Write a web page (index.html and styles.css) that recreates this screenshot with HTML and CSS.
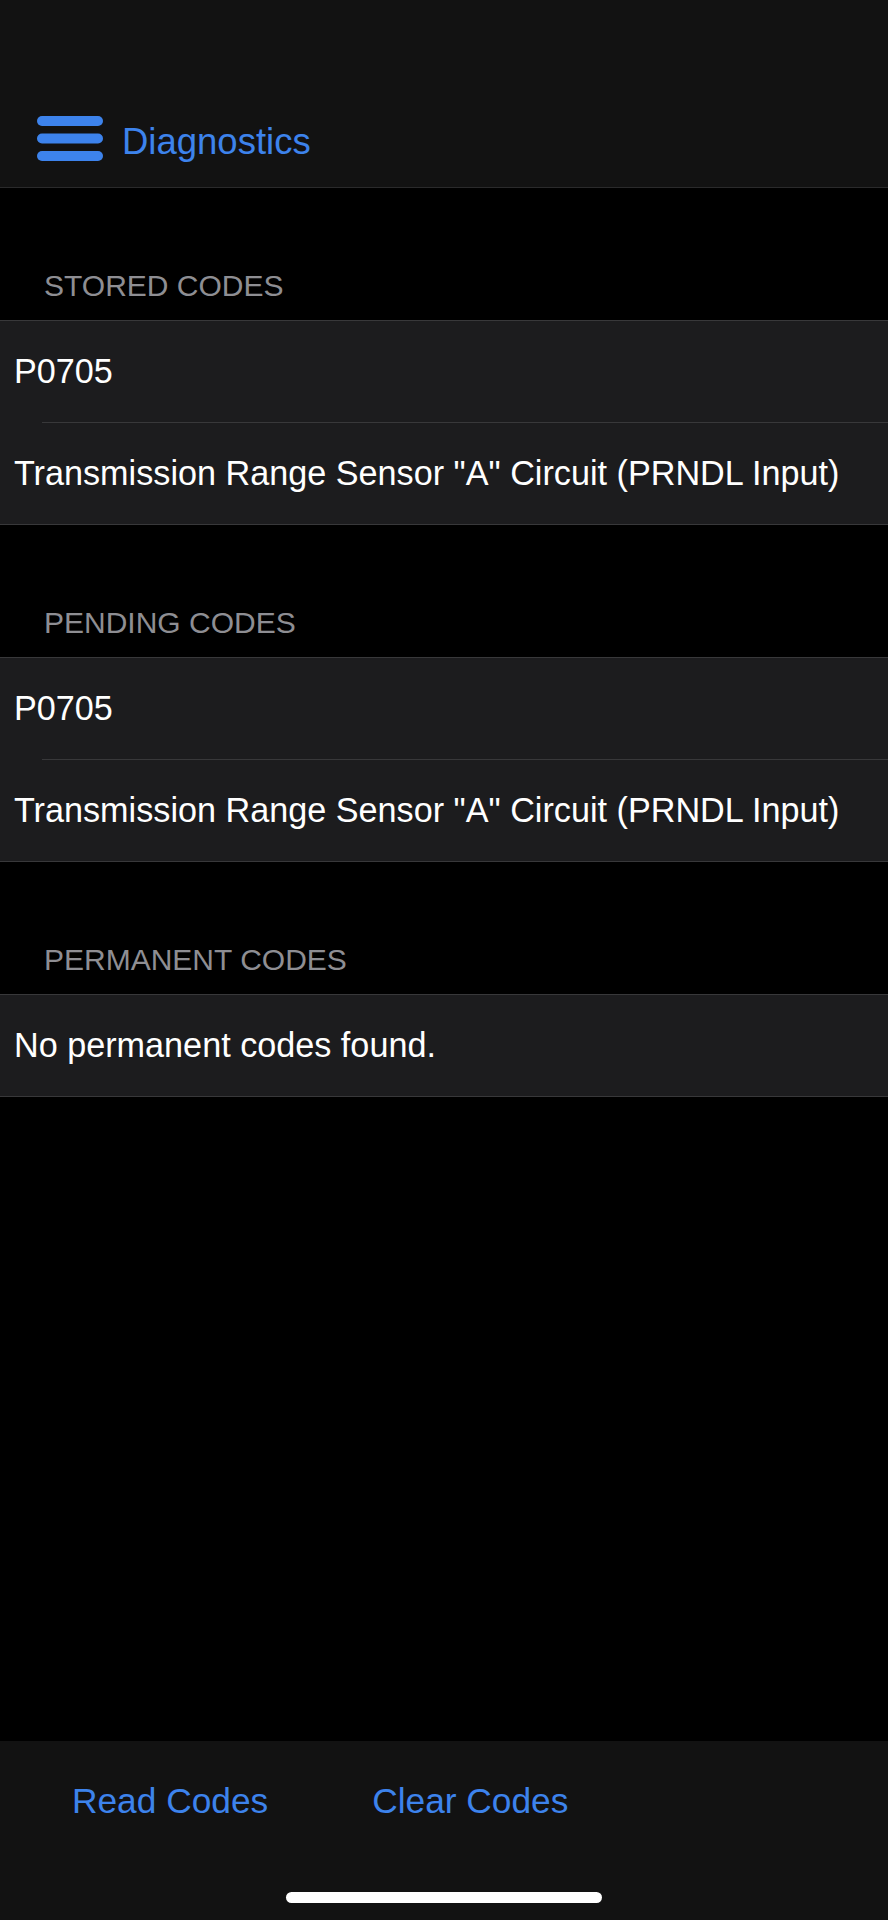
FILE: index.html
```html
<!DOCTYPE html>
<html lang="en">
<head>
    <meta charset="UTF-8">
    <title>Diagnostics</title>
    <link rel="stylesheet" href="styles.css">
</head>
<body>
<div class="navbar">
    <div class="navbar-row">
        <svg class="menu-icon" width="66" height="45" viewBox="0 0 66 45">
            <rect x="0" y="0" width="66" height="10" rx="5" fill="#3d83ec"/>
            <rect x="0" y="17.5" width="66" height="10" rx="5" fill="#3d83ec"/>
            <rect x="0" y="35" width="66" height="10" rx="5" fill="#3d83ec"/>
        </svg>
        <span class="navbar-title">Diagnostics</span>
    </div>
</div>

<div class="content">
    <div class="section-header">STORED CODES</div>
    <div class="group">
        <div class="row">P0705</div>
        <div class="sep"></div>
        <div class="row">Transmission Range Sensor "A" Circuit (PRNDL Input)</div>
    </div>

    <div class="section-header">PENDING CODES</div>
    <div class="group">
        <div class="row">P0705</div>
        <div class="sep"></div>
        <div class="row">Transmission Range Sensor "A" Circuit (PRNDL Input)</div>
    </div>

    <div class="section-header">PERMANENT CODES</div>
    <div class="group">
        <div class="row">No permanent codes found.</div>
    </div>
</div>

<div class="toolbar">
    <div class="toolbar-buttons">
        <a href="#" class="toolbar-btn">Read Codes</a>
        <a href="#" class="toolbar-btn">Clear Codes</a>
    </div>
    <div class="home-indicator"></div>
</div>
</body>
</html>
```

FILE: styles.css
```css
* {
    margin: 0;
    padding: 0;
    box-sizing: border-box;
}
body {
    display: flex;
    flex-direction: column;
    height: 1920px;
    background: #000;
    color: #fff;
    font-family: "Liberation Sans", Arial, sans-serif;
}
.navbar {
    height: 188px;
    background: #121212;
    border-bottom: 1px solid #2a2a2b;
}
.navbar-row {
    display: flex;
    align-items: center;
    gap: 19px;
    height: 94px;
    margin-top: 91px;
    padding-left: 37px;
}
.navbar-title {
    padding-top: 7px;
    font-size: 36.5px;
    color: #3d83ec;
}
.content {
    flex: 1;
}
.section-header {
    display: flex;
    align-items: flex-end;
    height: 132px;
    padding: 0 0 17px 44px;
    font-size: 30px;
    line-height: 34px;
    color: #8e8e93;
}
.group {
    background: #1c1c1e;
    border-top: 1px solid #38383a;
    border-bottom: 1px solid #38383a;
}
.row {
    display: flex;
    align-items: center;
    height: 101px;
    padding-left: 14px;
    font-size: 34.2px;
    line-height: 39px;
}
.sep {
    height: 1px;
    margin-left: 42px;
    background: #38383a;
}
.toolbar {
    display: flex;
    flex-direction: column;
    height: 179px;
    background: #121212;
}
.toolbar-buttons {
    display: flex;
    gap: 104px;
    padding: 40px 0 0 72px;
}
.toolbar-btn {
    font-size: 35.3px;
    line-height: 40px;
    color: #3d83ec;
    text-decoration: none;
}
.home-indicator {
    align-self: center;
    width: 316px;
    height: 11px;
    margin-top: 71px;
    border-radius: 6px;
    background: #fff;
}
```
